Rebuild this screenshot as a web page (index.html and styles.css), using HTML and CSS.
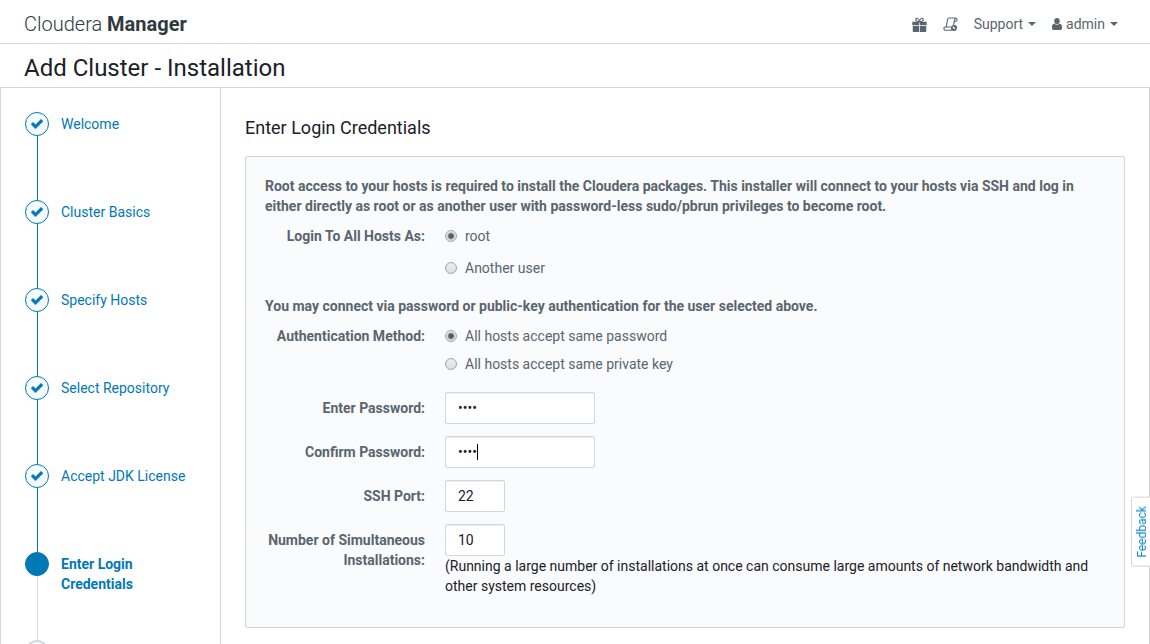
FILE: index.html
```html
<!DOCTYPE html>
<html lang="en">
<head>
<meta charset="utf-8">
<title>Add Cluster - Installation</title>
<meta name="viewport" content="width=device-width, initial-scale=1">
<link rel="stylesheet" href="styles.css">
</head>
<body>
<svg class="sprite" aria-hidden="true">
  <symbol id="check" viewBox="0 0 14 12"><path d="M.8 6.300 3 4.100l2.500 2.300L11 1.100l2.300 2.200-7.800 7.700z"/></symbol>
</svg>
<div class="app">
  <header class="topbar">
    <div class="brand">Cloudera <strong>Manager</strong></div>
    <nav class="menu" aria-label="Account">
      <button class="menu-item" type="button" aria-label="What's new">
        <svg class="icon" viewBox="0 0 16 16" fill="currentColor"><path d="M.3 5h7.300v3.900H.3zM8.400 5h7.300v3.900H8.400zM.8 9.700h6.800V16H1.600q-.8 0-.8-.8zM8.400 9.700h6.800v5.500q0 .8-.8.8H8.400z"/><path d="M7.800 4.800C5.700 4.800 4 4 4 2.600 4 .6 7 .8 7.900 4.600 9 .8 12 .6 12 2.600c0 1.400-1.700 2.200-3.800 2.200" fill="none" stroke="currentColor" stroke-width="1.200"/></svg>
      </button>
      <button class="menu-item" type="button" aria-label="Running commands">
        <svg class="icon" viewBox="0 0 16 16" fill="none" stroke="currentColor" stroke-width="1.200"><path d="M3.400 10.500 4.800 3q.4-1.900 2-1.900h6.500c2 0 2.200 3.400.2 3.400h-1.400c.8-1 .1-3.100 1.200-3.400M12.100 4.500 11.300 8.500M8.500 10.600H2.300c-1.900 0-1.800 3.500.2 3.500h7"/><circle cx="11.700" cy="11.700" r="2.300" stroke-width="1.700"/><path d="M12.500 8.600v2.200h2.500M10.900 14.800v-2.200H8.400"/></svg>
      </button>
      <button class="menu-item" type="button">Support<span class="caret"></span></button>
      <button class="menu-item" type="button">
        <svg class="icon-user" viewBox="0 0 10 12" fill="currentColor"><path d="M5 0c1.700 0 2.800 1.300 2.800 3.100S6.600 6.400 5 6.400 2.200 4.900 2.200 3.100 3.300 0 5 0zM2.300 5.600c1.500 1.800 3.900 1.800 5.400 0C9.400 5.800 10 7.500 10 9.700c0 1.500-.7 2.300-1.800 2.300H1.800C.7 12 0 11.200 0 9.700c0-2.200.6-3.900 2.300-4.100z"/></svg>admin<span class="caret"></span>
      </button>
    </nav>
  </header>
  <h1 class="page-title">Add Cluster - Installation</h1>
  <div class="wizard">
    <nav class="sidebar" aria-label="Steps">
      <ol class="steps">
        <li class="step done"><span class="marker"><svg class="tick"><use href="#check"/></svg></span><a class="step-link" href="#">Welcome</a></li>
        <li class="step done"><span class="marker"><svg class="tick"><use href="#check"/></svg></span><a class="step-link" href="#">Cluster Basics</a></li>
        <li class="step done"><span class="marker"><svg class="tick"><use href="#check"/></svg></span><a class="step-link" href="#">Specify Hosts</a></li>
        <li class="step done"><span class="marker"><svg class="tick"><use href="#check"/></svg></span><a class="step-link" href="#">Select Repository</a></li>
        <li class="step done"><span class="marker"><svg class="tick"><use href="#check"/></svg></span><a class="step-link" href="#">Accept JDK License</a></li>
        <li class="step current" aria-current="step"><span class="marker"></span><a class="step-link" href="#">Enter Login Credentials</a></li>
        <li class="step upcoming"><span class="marker"></span></li>
      </ol>
    </nav>
    <main class="content">
      <h2 class="section-title">Enter Login Credentials</h2>
      <form class="panel">
        <p class="intro">Root access to your hosts is required to install the Cloudera packages. This installer will connect to your hosts via SSH and log in either directly as root or as another user with password-less sudo/pbrun privileges to become root.</p>
        <div class="row" role="radiogroup" aria-labelledby="login-as">
          <span class="row-label" id="login-as">Login To All Hosts As:</span>
          <div class="choices spaced">
            <label class="choice"><input class="radio" type="radio" name="login" checked>root</label>
            <label class="choice"><input class="radio" type="radio" name="login">Another user</label>
          </div>
        </div>
        <p class="intro">You may connect via password or public-key authentication for the user selected above.</p>
        <div class="row" role="radiogroup" aria-labelledby="auth-method">
          <span class="row-label" id="auth-method">Authentication Method:</span>
          <div class="choices">
            <label class="choice"><input class="radio" type="radio" name="auth" checked>All hosts accept same password</label>
            <label class="choice"><input class="radio" type="radio" name="auth">All hosts accept same private key</label>
          </div>
        </div>
        <div class="row">
          <label class="row-label" for="password">Enter Password:</label>
          <div class="field"><input class="input" id="password" type="password" value="pass"></div>
        </div>
        <div class="row">
          <label class="row-label" for="confirm">Confirm Password:</label>
          <div class="field editing"><input class="input" id="confirm" type="password" value="pass"></div>
        </div>
        <div class="row">
          <label class="row-label" for="port">SSH Port:</label>
          <div class="field"><input class="input short" id="port" type="text" value="22"></div>
        </div>
        <div class="row">
          <label class="row-label" for="parallel">Number of Simultaneous Installations:</label>
          <div class="field"><input class="input short" id="parallel" type="text" value="10" aria-describedby="parallel-help">
            <p class="help" id="parallel-help">(Running a large number of installations at once can consume large amounts of network bandwidth and other system resources)</p>
          </div>
        </div>
      </form>
    </main>
  </div>
</div>
<button class="feedback" type="button">Feedback</button>
</body>
</html>
```

FILE: styles.css
```css
* { box-sizing: border-box; }
body {
  margin: 0;
  font: 14px/20px Roboto, "Liberation Sans", sans-serif;
  color: #1b2127;
  background: #fff;
}
button, input { font: inherit; color: inherit; }
.sprite { display: none; }
.app {
  display: flex;
  flex-direction: column;
  height: 100vh;
  overflow: hidden;
}
.topbar {
  display: flex;
  flex: none;
  align-items: center;
  justify-content: space-between;
  padding: 10px 32px 5px 24px;
  border-bottom: 1px solid #d6d6da;
}
.brand {
  font-size: 20px;
  line-height: 28px;
  font-weight: 300;
  color: #2e3a40;
}
.brand strong { font-weight: 700; }
.menu {
  display: flex;
  align-items: center;
  gap: 16px;
  color: #5a656d;
}
.menu-item {
  display: flex;
  align-items: center;
  padding: 0;
  border: 0;
  background: none;
  cursor: pointer;
}
.icon { width: 15px; height: 15px; }
.icon-user { width: 10px; height: 12px; margin-right: 4px; }
.caret {
  margin-left: 5px;
  border: 4px solid transparent;
  border-top-color: currentColor;
  border-bottom: 0;
}
.page-title {
  flex: none;
  margin: 0;
  padding: 8px 24px 3px;
  font-size: 24px;
  line-height: 32px;
  font-weight: 400;
}
.wizard {
  display: flex;
  flex: 1;
  min-height: 0;
  border: 1px solid #d6d6da;
  border-bottom: 0;
}
.sidebar {
  flex: none;
  width: 220px;
  padding: 24px;
  overflow: hidden;
  border-right: 1px solid #d6d6da;
}
.steps { margin: 0; padding: 0; list-style: none; }
.step {
  display: grid;
  grid-template-columns: 24px 1fr;
  grid-template-rows: 24px 1fr;
  column-gap: 12px;
  min-height: 88px;
}
.step::after {
  content: "";
  grid-area: 2 / 1;
  width: 1px;
  margin-left: 12px;
  background: #0079b5;
}
.marker {
  display: flex;
  align-items: center;
  justify-content: center;
  height: 24px;
  border: 1px solid #0079b5;
  border-radius: 50%;
  background: #f5fafe;
}
.tick { width: 14px; height: 12px; fill: #0079b5; }
.step-link {
  grid-area: 1 / 2 / 3 / 3;
  padding-top: 2px;
  color: #0079b5;
  text-decoration: none;
}
.current .marker { background: #0079b5; }
.current .step-link { font-weight: 700; }
.current::after, .upcoming::after { background: #d6d6da; }
.upcoming .marker { border: 2px solid #d6d6da; }
.content {
  flex: 1;
  min-width: 0;
  padding: 24px;
  overflow: hidden;
}
.section-title {
  margin: 0 0 12px;
  padding: 4px 0;
  font-size: 18px;
  line-height: 24px;
  font-weight: 400;
}
.panel {
  padding: 19px;
  border: 1px solid #d6d6da;
  border-radius: 2px;
  background: #f9fbfd;
}
.intro {
  margin: 0 0 4px;
  font-weight: 700;
  color: #5a656d;
}
.row {
  display: grid;
  grid-template-columns: 160px 1fr;
  column-gap: 20px;
  margin-bottom: 12px;
}
.row-label {
  padding-top: 6px;
  font-weight: 700;
  text-align: right;
  color: #5a656d;
}
.choices {
  display: flex;
  flex-direction: column;
  align-items: flex-start;
  gap: 8px;
  padding: 6px 0;
  color: #5a656d;
}
.choices.spaced { gap: 12px; }
.choice { display: flex; align-items: center; gap: 8px; }
.radio {
  appearance: none;
  width: 12px;
  height: 12px;
  margin: 0;
  border: 1px solid #a3a3a3;
  border-radius: 50%;
  background: linear-gradient(#ededed, #dedede);
}
.radio:checked {
  background: radial-gradient(circle, #5a5a5a 2px, transparent 4px), linear-gradient(#ededed, #dedede);
}
.field { position: relative; }
.input {
  display: block;
  width: 150px;
  height: 32px;
  padding: 5px 12px;
  border: 1px solid #d6d6da;
  border-radius: 2px;
  background: #fff;
  box-shadow: inset 0 1px 1px rgba(0, 0, 0, 0.075);
}
.input.short { width: 60px; }
.editing::after {
  content: "";
  position: absolute;
  top: 8px;
  left: 32px;
  width: 1px;
  height: 16px;
  background: #000;
}
.help { margin: 0; }
.feedback {
  position: fixed;
  right: 0;
  bottom: 77px;
  padding: 8px 2px 8px 0;
  border: 1px solid #d6d6da;
  border-left: 0;
  border-radius: 0 2px 2px 0;
  background: #fff;
  color: #0f8ac6;
  font-size: 12px;
  line-height: 16px;
  writing-mode: vertical-rl;
  transform: rotate(180deg);
  cursor: pointer;
}
```
